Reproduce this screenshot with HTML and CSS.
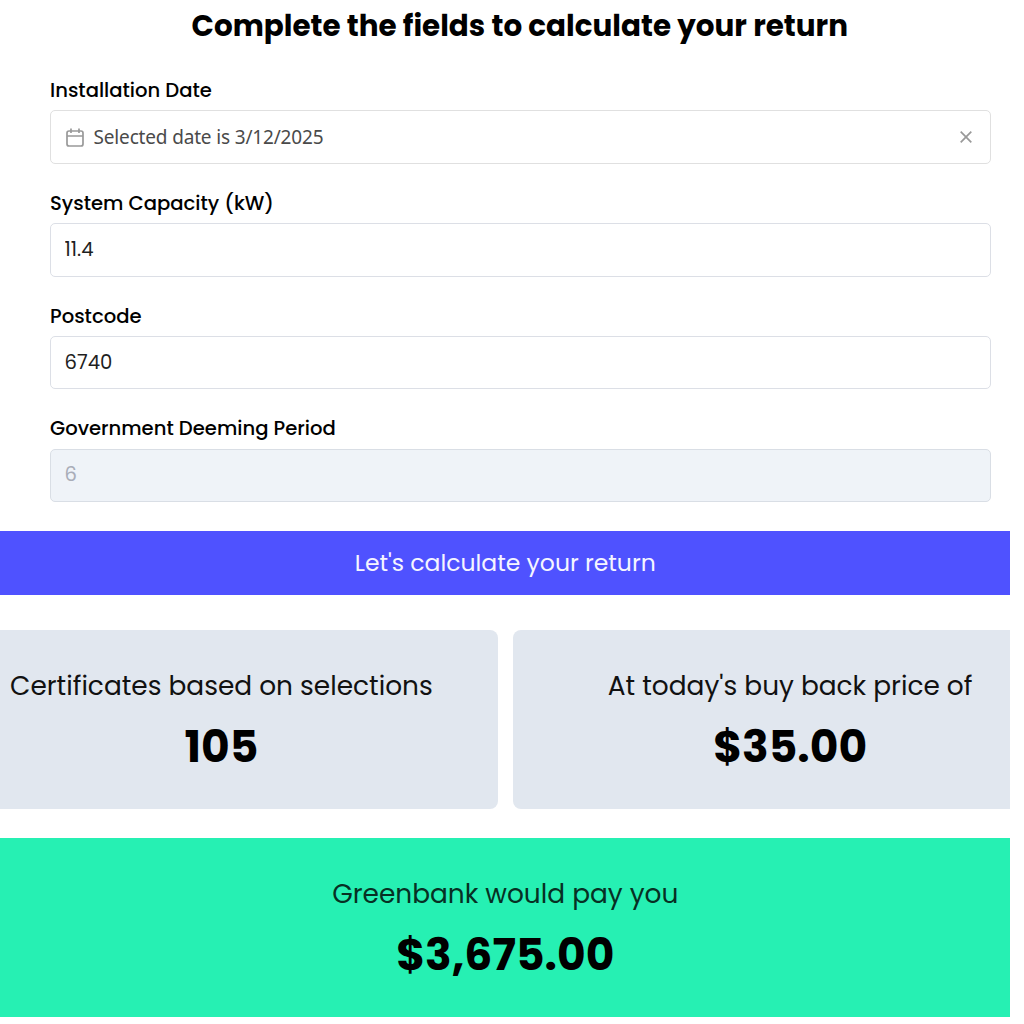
FILE: index.html
```html
<!DOCTYPE html>
<html lang="en">

<head>
  <meta charset="utf-8">
  <title>Calculate your return</title>
  <link rel="stylesheet" href="styles.css">
</head>

<body>
  <div class="calculator">
    <h1>Complete the fields to calculate your return</h1>
    <form class="fields">
      <div class="field">
        <label for="date">Installation Date</label>
        <div class="date-input" id="date">
          <svg class="calendar-icon" viewBox="0 0 18 19">
            <rect x="1" y="3" width="16" height="15" rx="2" />
            <path d="M1 8h16M5 0.5v4.5M13 0.5v4.5" />
          </svg>
          <span class="date-text">Selected date is 3/12/2025</span>
          <svg class="clear-icon" viewBox="0 0 12 12">
            <path d="M0.7 0.7l10.6 10.6M11.3 0.7l-10.6 10.6" />
          </svg>
        </div>
      </div>
      <div class="field">
        <label for="capacity">System Capacity (kW)</label>
        <input type="text" id="capacity" value="11.4">
      </div>
      <div class="field">
        <label for="postcode">Postcode</label>
        <input type="text" id="postcode" value="6740">
      </div>
      <div class="field">
        <label for="period">Government Deeming Period</label>
        <input type="text" id="period" value="6" disabled>
      </div>
    </form>
    <button class="calculate-button">Let's calculate your return</button>
    <div class="cards">
      <div class="card">
        <p class="card-label">Certificates based on selections</p>
        <p class="card-value">105</p>
      </div>
      <div class="card">
        <p class="card-label">At today's buy back price of</p>
        <p class="card-value">$35.00</p>
      </div>
    </div>
    <div class="total">
      <p class="card-label">Greenbank would pay you</p>
      <p class="card-value">$3,675.00</p>
    </div>
  </div>
</body>

</html>
```

FILE: styles.css
```css
* {
  box-sizing: border-box;
}

body {
  margin: 0;
  background-color: #ffffff;
  color: #000000;
  font-family: Poppins, Inter, sans-serif;
}

.calculator {
  width: 1009.5px;
  height: 1024px;
  overflow: hidden;
}

h1 {
  margin: 0;
  padding-left: 30px;
  height: 77px;
  font-size: 29.4px;
  font-weight: 700;
  line-height: 52px;
  text-align: center;
}

.fields {
  display: flex;
  flex-direction: column;
  gap: 26px;
  padding: 0 18.5px 0 50px;
}

.field {
  height: 86.8px;
}

label {
  display: block;
  height: 33.3px;
  font-size: 19.6px;
  font-weight: 500;
  line-height: 26px;
}

input,
.date-input {
  display: block;
  width: 100%;
  height: 53.5px;
  padding: 0 13.5px 2px;
  border: 1.5px solid #dcdfe6;
  border-radius: 5px;
  background-color: #ffffff;
  color: #1f1f1f;
  font-family: inherit;
  font-size: 19.6px;
}

input:disabled {
  background-color: #eff3f8;
  border-color: #d9dee5;
  color: #a9adb8;
}

.date-input {
  display: flex;
  align-items: center;
  padding: 0 18px 0 14.5px;
  border-color: #e0e0e0;
  color: #4a4a4a;
  font-family: "Segoe UI", "Noto Sans", sans-serif;
  font-size: 19px;
  letter-spacing: -0.16px;
}

.date-text {
  flex: 1;
  margin-left: 10px;
}

.calendar-icon {
  width: 18px;
  height: 19px;
}

.clear-icon {
  width: 12px;
  height: 12px;
}

.calendar-icon,
.clear-icon {
  fill: none;
  stroke: #999999;
  stroke-width: 1.7;
}

.calculate-button {
  display: block;
  width: 100%;
  height: 64px;
  margin-top: 28.8px;
  padding: 0 0 1px 1px;
  border: none;
  background-color: #4f52ff;
  color: #f5f5ff;
  font-family: inherit;
  font-size: 23.5px;
}

/* the cards run past both edges of the calculator */
.cards {
  display: grid;
  grid-template-columns: 1fr 1fr;
  gap: 15px;
  margin: 35.5px -57.5px 29.5px -55.5px;
}

.card,
.total {
  height: 178.5px;
  padding-top: 35px;
  background-color: #e1e7ef;
  text-align: center;
}

.card {
  border-radius: 8px;
}

.total {
  padding-left: 1px;
  background-color: #26f0b3;
}

.card-label {
  margin: 0;
  font-size: 26.4px;
  line-height: 42px;
  color: #111111;
}

.total .card-label {
  color: #073024;
}

.card-value {
  margin: 6px 0 0;
  font-size: 44px;
  font-weight: 700;
  line-height: 68px;
}
```
